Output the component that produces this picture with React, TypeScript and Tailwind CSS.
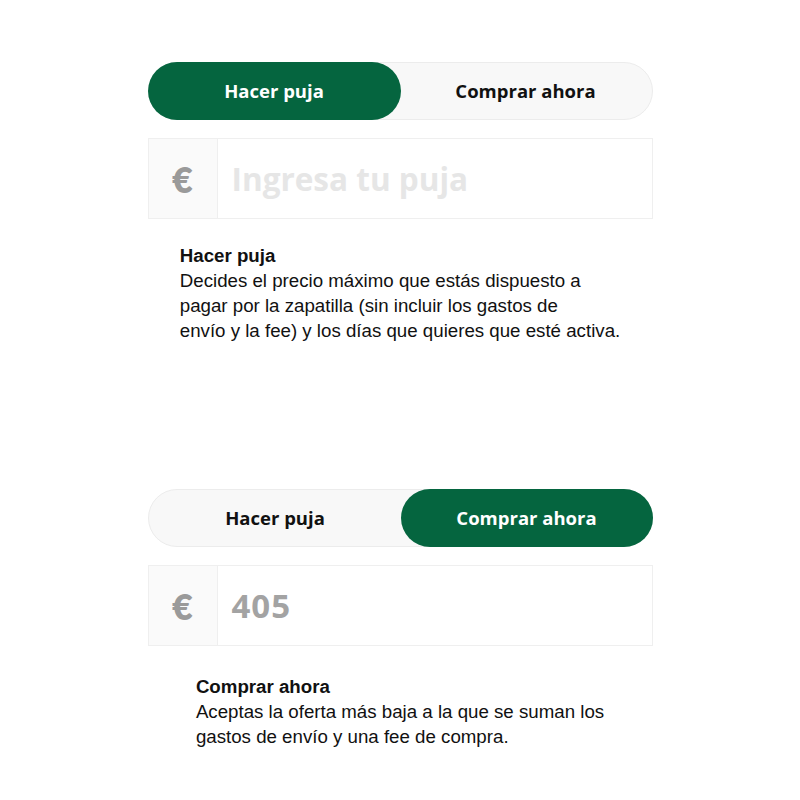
import React from 'react';

const GREEN = 'bg-[#05653f]';

type Mode = 'bid' | 'buy';

const Toggle: React.FC<{ active: Mode }> = ({ active }) => (
  <div className="flex h-[58px] w-[505px] rounded-full border border-[#ececec] bg-[#f8f8f8]">
    <div
      className={`flex w-[253px] items-center justify-center rounded-full text-[18.5px] font-bold ${
        active === 'bid' ? `${GREEN} -m-px h-[58px] text-white` : 'text-[#111]'
      }`}
    >
      Hacer puja
    </div>
    <div
      className={`flex flex-1 items-center justify-center rounded-full text-[18.5px] font-bold ${
        active === 'buy' ? `${GREEN} -m-px h-[58px] text-white` : 'text-[#111]'
      }`}
    >
      Comprar ahora
    </div>
  </div>
);

const PriceInput: React.FC<{ value?: string; placeholder?: string }> = ({ value, placeholder }) => (
  <div className="mt-[18px] flex h-[81px] w-[505px] border border-[#efefef] bg-white">
    <div className="flex w-[69px] items-center justify-center border-r border-[#efefef] bg-[#fafafa] text-[36px] font-extrabold text-[#9a9a9a] [font-family:Lato,sans-serif]">
      €
    </div>
    <div className="flex flex-1 items-center pl-[14px] font-bold">
      {value ? (
        <span className="text-[33px] tracking-[1px] text-[#a3a3a3]">{value}</span>
      ) : (
        <span className="text-[31.5px] text-[#e6e6e6]">{placeholder}</span>
      )}
    </div>
  </div>
);

const Info: React.FC<{ title: string; lines: string[] }> = ({ title, lines }) => (
  <div className="flex justify-center">
    <div className="whitespace-nowrap text-[18.7px] leading-[25px] text-[#111] [font-family:'Liberation_Sans',Arial,sans-serif]">
      <div className="font-bold">{title}</div>
      {lines.map(l => (
        <div key={l}>{l}</div>
      ))}
    </div>
  </div>
);

export default function App() {
  return (
    <div className="min-h-[800px] w-[800px] bg-white [font-family:'Open_Sans',Lato,sans-serif]">
      <div className="flex flex-col items-center pt-[62px]">
        <Toggle active="bid" />
        <PriceInput placeholder="Ingresa tu puja" />
        <div className="mt-[24px] w-full">
          <Info
            title="Hacer puja"
            lines={[
              'Decides el precio máximo que estás dispuesto a',
              'pagar por la zapatilla (sin incluir los gastos de',
              'envío y la fee) y los días que quieres que esté activa.',
            ]}
          />
        </div>
      </div>
      <div className="flex flex-col items-center pt-[146px]">
        <Toggle active="buy" />
        <PriceInput value="405" />
        <div className="mt-[28px] w-full">
          <Info
            title="Comprar ahora"
            lines={[
              'Aceptas la oferta más baja a la que se suman los',
              'gastos de envío y una fee de compra.',
            ]}
          />
        </div>
      </div>
    </div>
  );
}
